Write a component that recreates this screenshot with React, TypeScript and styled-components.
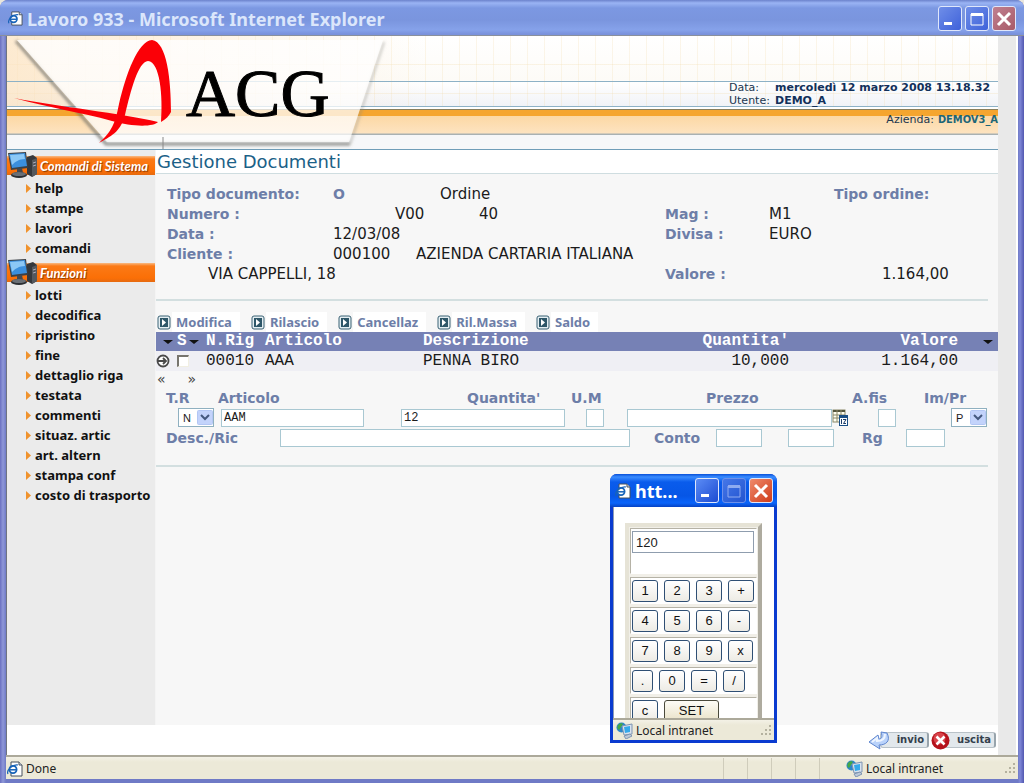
import React from "react";
import styled, { createGlobalStyle } from "styled-components";

const verdana = `"DejaVu Sans", Verdana, sans-serif`;
const tahoma = `"Noto Sans", Tahoma, sans-serif`;
const courier = `"Liberation Mono", "Courier New", monospace`;
const arial = `"Liberation Sans", Arial, sans-serif`;

const label = "#6d7ea8";

const Global = createGlobalStyle`
  * { box-sizing: border-box; }
  body { margin: 0; background: #e9e6dc; font-family: ${verdana}; color: #1b1b1b; }
  button, input, select { font: inherit; color: inherit; margin: 0; padding: 0; }
  a { color: inherit; text-decoration: none; }
  svg { flex-shrink: 0; }
`;

/* ---------- outer window ---------- */

const Window = styled.div`
  position: relative;
  min-height: 100vh;
  display: flex;
  flex-direction: column;
  padding: 0 6px 4px 6px;
  border-radius: 8px 8px 0 0;
  background: linear-gradient(90deg, #6a70c0 0, #8f98d8 3px, #6f7ac6 6px, #6f7ac6 calc(100% - 6px), #8088d8 calc(100% - 4px), #5258b0 100%);
`;

const TitleBar = styled.header`
  display: flex;
  align-items: center;
  gap: 4px;
  height: 36px;
  margin: 0 -6px;
  padding: 2px 8px 0 8px;
  border-radius: 8px 8px 0 0;
  border-bottom: 1px solid #8a909c;
  background: linear-gradient(#6c82cc 0, #9ab4f4 3px, #7c98e2 8px, #7a95de 20px, #86a2ea 30px, #7a92dc 34px);
`;

const Title = styled.h1`
  flex: 1;
  margin: 0;
  font: 700 18px/24px ${tahoma};
  color: #dbe6fb;
`;

const Buttons = styled.div`
  display: flex;
  gap: 3px;
`;

const CaptionButton = styled.button<{ $tone: "pale" | "blue" | "dim" | "rose" | "red" }>`
  display: grid;
  place-items: center;
  width: 24px;
  height: 25px;
  border: 1px solid ${(p) => (p.$tone === "dim" ? "#6d90ea" : "#dfe7fb")};
  border-radius: 3px;
  background: ${(p) =>
    ({
      pale: "linear-gradient(135deg, #6f8ee8, #3f62da)",
      blue: "linear-gradient(135deg, #5b8cf5, #1c4bd2)",
      dim: "linear-gradient(135deg, #4577e8, #2354d0)",
      rose: "linear-gradient(135deg, #c08090, #a85a68)",
      red: "linear-gradient(135deg, #ef8a6c, #cf3c1a)",
    })[p.$tone]};
`;

const Page = styled.div`
  flex: 1;
  display: flex;
  flex-direction: column;
  padding-right: 18px;
  border-left: 1px solid #6f7480;
  border-right: 2px solid #fff;
  background: #e9e9e9;
`;

/* ---------- banner ---------- */

const Banner = styled.div`
  display: flex;
  justify-content: space-between;
  height: 114px;
  background:
    linear-gradient(transparent 45px, #8db1c6 45px, #8db1c6 46px, transparent 46px, transparent 70px, #8db1c6 70px, #8db1c6 71px, #fff 71px, #fff 73px, #8a7f5c 73px, #8a7f5c 74px, #f5a52f 74px, #f5a52f 80px, #fcd8a4 80px, #fde3c0 97px, #a9b1b3 98px, #a9b1b3 99px, #f6f7f9 99px, #f6f7f9 113px, #6f9db8 113px),
    linear-gradient(90deg, rgba(252, 226, 190, 0.7), rgba(255, 250, 240, 0) 420px),
    repeating-linear-gradient(90deg, transparent 0, transparent 10px, rgba(240, 214, 160, 0.22) 10px, rgba(240, 214, 160, 0.22) 11px, transparent 11px, transparent 17px),
    repeating-linear-gradient(transparent 0, transparent 28px, rgba(240, 214, 160, 0.25) 28px, rgba(240, 214, 160, 0.25) 29px),
    linear-gradient(#ffffff, #fdfbf7 44px, #ffffff 46px, #f1f3f7 70px);
`;

const Info = styled.div`
  display: flex;
  flex-direction: column;
  align-items: flex-end;
  padding-top: 45px;
  font-size: 11px;
  line-height: 13px;
  color: #20364f;
`;

const Session = styled.dl`
  display: grid;
  grid-template-columns: 46px 223px;
  margin: 0 0 6px;
  dt, dd { margin: 0; }
  dd { font-weight: 700; color: #12305a; }
`;

const Company = styled.div`
  display: flex;
  gap: 4px;
  strong { font-family: "DejaVu Sans Condensed", ${verdana}; color: #1d6678; }
`;

/* ---------- side navigation ---------- */

const Columns = styled.div`
  flex: 1;
  display: flex;
`;

const Sidebar = styled.nav`
  flex: 0 0 149px;
  padding-top: 1px;
  border-right: 1px solid #f4f4f4;
  background: #ebebeb;
`;

const SectionHead = styled.h2`
  display: flex;
  align-items: center;
  height: 27px;
  margin: 0;
  background: linear-gradient(transparent 5px, #f9ba83 5px, #fb7a17 8px, #fb6f06 20px, #e56a10 24px, transparent 24px);
  font: italic 700 13px/18px Lato, ${tahoma};
  color: #fff;
  text-shadow: 1px 1px 1px #8a3a00;
  white-space: nowrap;
  span { padding: 3px 0 0 1px; }
`;

const Menu = styled.ul`
  margin: 0;
  padding: 0 0 0 19px;
  list-style: none;
  font: 700 13px/20px ${tahoma};
  color: #111;
`;

const MenuLink = styled.a`
  display: flex;
  align-items: center;
  gap: 4px;
  white-space: nowrap;
`;

/* ---------- main panel ---------- */

const Main = styled.main`
  flex: 1;
  min-width: 0;
  background: #f7f7f7;
`;

const Heading = styled.h2`
  margin: 0;
  height: 24px;
  padding-left: 1px;
  border-bottom: 1px solid #cfdde0;
  background: #fff;
  font: 400 18px/24px ${verdana};
  color: #1b6187;
`;

const Details = styled.div`
  padding: 10px 0 15px 11px;
  font-size: 15px;
  line-height: 20px;
`;

const Line = styled.div`
  display: flex;
`;

const Cell = styled.span<{ $w?: number; $label?: boolean; $indent?: number }>`
  flex: ${(p) => (p.$w ? `0 0 ${p.$w}px` : "0 0 auto")};
  padding-left: ${(p) => p.$indent ?? 0}px;
  white-space: nowrap;
  ${(p) => p.$label && `font-weight: 700; font-size: 14px; color: ${label};`}
`;

const Rule = styled.hr`
  height: 2px;
  margin: 0 10px 0 0;
  border: 0;
  background: #d3dfe0;
`;

const Toolbar = styled.div`
  display: flex;
  gap: 11px;
  padding: 11px 0 0 1px;
`;

const ToolButton = styled.button`
  display: flex;
  align-items: center;
  border: 0;
  background: none;
  font: 700 13px/20px ${tahoma};
  color: ${label};
  span { margin-left: 1px; padding: 0 8px 0 4px; background: #fff; }
`;

const Grid = styled.table`
  width: 100%;
  table-layout: fixed;
  border-collapse: collapse;
  font: 16px/19px ${courier};
  th, td { padding: 0; text-align: left; white-space: nowrap; height: 19px; }
  td { height: 20px; }
  thead { background: #7681b5; color: #fff; }
  tbody { background: #efeff4; }
`;

const Num = styled.td`
  && { text-align: right; }
`;

const NumHead = styled.th`
  && { text-align: right; }
`;

const Flex = styled.div<{ $pad?: number }>`
  display: flex;
  align-items: center;
  gap: 2px;
  padding-left: ${(p) => p.$pad ?? 0}px;
`;

const PlainButton = styled.button`
  display: grid;
  place-items: center;
  border: 0;
  background: none;
`;

const Tick = styled.input`
  appearance: none;
  width: 12px;
  height: 12px;
  border: 1px solid #f1efe2;
  border-top: 2px solid #77756e;
  border-left: 2px solid #77756e;
  background: #fff;
`;

const Pager = styled.div`
  display: flex;
  gap: 22px;
  padding-left: 1px;
  height: 17px;
  font: 400 14px/15px ${verdana};
  color: #444;
`;

const Form = styled.form`
  padding: 0 0 17px 10px;
`;

const Fields = styled.div`
  display: grid;
  grid-template-columns: 52px 183px 170px 56px 225px 72px 1fr;
  margin-bottom: 1px;
`;

const Field = styled.div<{ $label?: number; $box?: number }>`
  label { display: block; padding-left: ${(p) => p.$label ?? 0}px; font: 700 14px/20px ${verdana}; color: ${label}; white-space: nowrap; }
  > div { display: flex; align-items: center; height: 19px; padding-left: ${(p) => p.$box ?? 0}px; }
`;

const InlineFields = styled.div`
  display: flex;
  align-items: center;
  height: 20px;
  label { font: 700 14px/20px ${verdana}; color: ${label}; }
`;

const Slot = styled.div<{ $w: number }>`
  display: flex;
  flex: 0 0 ${(p) => p.$w}px;
`;

const TextBox = styled.input<{ $w: number }>`
  width: ${(p) => p.$w}px;
  height: 18px;
  padding: 0 2px;
  border: 1px solid #a9c8d2;
  border-radius: 0;
  background: #fff;
  font: 12px/16px ${courier};
`;

const SelectWrap = styled.span`
  position: relative;
  display: flex;
  svg { position: absolute; right: 1px; top: 2px; pointer-events: none; }
`;

const Select = styled.select`
  appearance: none;
  width: 36px;
  height: 19px;
  padding-left: 4px;
  border: 1px solid #8fb0c0;
  border-radius: 0;
  background: #fff;
  font: 11px/16px ${arial};
`;

/* ---------- footer ---------- */

const Actions = styled.div`
  display: flex;
  justify-content: flex-end;
  align-items: center;
  gap: 2px;
  height: 30px;
  padding: 0 2px 0 0;
  background: #fff;
`;

const ActionButton = styled.button`
  display: flex;
  align-items: center;
  border: 0;
  background: none;
  font: 700 10px/14px ${verdana};
  color: #34404c;
  svg { position: relative; z-index: 1; margin-right: -10px; }
  span { padding: 0 3px 0 16px; border: 1px solid #b9c2c8; border-right: 2px solid #98a4ac; border-radius: 3px; background: #e2e8ec; }
`;

const StatusBar = styled.footer<{ $inner?: boolean }>`
  display: flex;
  align-items: center;
  gap: 3px;
  height: ${(p) => (p.$inner ? 22 : 24)}px;
  padding: 1px 1px 0 ${(p) => (p.$inner ? 3 : 1)}px;
  border-top: 2px solid #aca99a;
  background: linear-gradient(#f3f1e6, #ece9d8 5px);
  font: 12px/18px ${tahoma};
  color: #222;
`;

const Panes = styled.div`
  flex: 1;
  display: flex;
  justify-content: flex-end;
  align-self: stretch;
`;

const Pane = styled.span`
  width: 24px;
  border-left: 1px solid #cfccbb;
`;

const Zone = styled.span<{ $w?: number }>`
  flex: ${(p) => (p.$w ? `0 0 ${p.$w}px` : "1")};
`;

/* ---------- calculator pop-up ---------- */

const Popup = styled.section`
  position: absolute;
  left: 610px;
  top: 474px;
  width: 167px;
  height: 269px;
  display: flex;
  flex-direction: column;
  padding: 0 3px 3px;
  border-radius: 7px 7px 0 0;
  background: #0a3bd0;
`;

const PopupTitle = styled.header`
  display: flex;
  align-items: center;
  gap: 4px;
  height: 33px;
  margin: 0 -3px;
  padding: 0 4px 0 5px;
  border-radius: 7px 7px 0 0;
  background: linear-gradient(#0850d8 0, #3a8cff 3px, #0a5cec 8px, #0656e6 22px, #0a64fa 29px, #0642c4 33px);
  h2 { flex: 1; margin: 0; font: 700 18px/24px ${tahoma}; color: #fff; }
`;

const PopupBody = styled.div`
  flex: 1;
  min-height: 0;
  overflow: hidden;
  padding: 16px 11px 0 11px;
  border-left: 1px solid #8d9bb5;
  border-right: 1px solid #fff;
  background: #fff;
`;

const Pad = styled.div`
  display: flex;
  flex-direction: column;
  gap: 3px;
  padding: 1px;
  border: 4px solid;
  border-color: #e6e3d6 #aeab9f #aeab9f #e6e3d6;
  background: #f1efe8;
`;

const PadRow = styled.div<{ $tall?: boolean }>`
  display: flex;
  align-items: flex-start;
  gap: 6px;
  height: ${(p) => (p.$tall ? 46 : 27)}px;
  padding: 2px 2px 0 1px;
  border: 1px solid;
  border-color: #b5b2a6 #fff #fff #b5b2a6;
  background: #fff;
`;

const Display = styled.input`
  width: 100%;
  height: 22px;
  padding: 0 3px;
  border: 1px solid #8f9dae;
  border-radius: 0;
  background: #fff;
  font: 13px/18px ${arial};
`;

const Key = styled.button<{ $w?: number; $warm?: boolean }>`
  flex: 0 0 ${(p) => p.$w ?? 26}px;
  height: 22px;
  border: 1px solid ${(p) => (p.$warm ? "#4a4a3c" : "#2f4f74")};
  border-radius: 3px;
  background: ${(p) => (p.$warm ? "linear-gradient(#fdfcf6, #e9e2c8)" : "linear-gradient(#ffffff, #edebe4)")};
  font: 13px/18px ${arial};
  color: #111;
`;

/* ---------- drawings ---------- */

const PageIcon = ({ size = 16 }: { size?: number }) => (
  <svg width={size} height={size} viewBox="0 0 16 16" aria-hidden="true">
    <path d="M4 1h8l3 3v11H4z" fill="#fff" stroke="#46505c" />
    <path d="M12 1v3h3" fill="#dbe3ee" stroke="#46505c" />
    <circle cx="6" cy="8.500" r="3.600" fill="#fff" stroke="#1763b8" strokeWidth="1.800" />
    <path d="M3 8.800h6" stroke="#1763b8" strokeWidth="1.500" />
    <path d="M1 13C-1 9 6 3 11 4" fill="none" stroke="#1763b8" strokeWidth="1.200" />
  </svg>
);

const Minimize = () => (
  <svg width="16" height="16" aria-hidden="true"><path d="M2 11h8v3H2z" fill="#fff" /></svg>
);

const Maximize = ({ color = "#fff" }: { color?: string }) => (
  <svg width="16" height="16" aria-hidden="true"><path d="M2 3h12v11H2z" fill="none" stroke={color} /><path d="M2 2h12v3H2z" fill={color} /></svg>
);

const Close = () => (
  <svg width="16" height="16" aria-hidden="true"><path d="M2 2l12 12M14 2L2 14" stroke="#fff" strokeWidth="3" /></svg>
);

const Logo = () => (
  <svg width="384" height="113" viewBox="7 36 384 113" role="img" aria-label="ACG">
    <defs>
      <filter id="soft" x="-10%" y="-10%" width="120%" height="125%"><feGaussianBlur stdDeviation="1.6" /></filter>
      <linearGradient id="sheet" x1="0" y1="0" x2="0" y2="1">
        <stop offset="0" stopColor="#fff" stopOpacity="0.75" />
        <stop offset="1" stopColor="#fff" stopOpacity="0.55" />
      </linearGradient>
    </defs>
    <path d="M16 41L106 144H350" fill="none" stroke="#6b6b66" strokeOpacity="0.75" strokeWidth="3" filter="url(#soft)" />
    <path d="M350 144L384 42" fill="none" stroke="#8a8a84" strokeOpacity="0.5" strokeWidth="2" filter="url(#soft)" />
    <path d="M17 40H383L349 142H107Z" fill="#fffdf9" fillOpacity="0.35" />
    <path d="M17 40H383L349 142H107Z" fill="url(#sheet)" />
    <path d="M163 137v12" stroke="#888" strokeWidth="1" />
    <path d="M99 143C112 131 115 124 119 104C126 74 138 41 152 40C167 42 171 80 171 112C169 116 166 119 161 122C163 96 160 62 148 61C138 62 131 90 125 115C121 130 114 135 99 143Z" fill="#fb0007" />
    <path d="M14 98C60 107 120 113 158 122C154 127 132 127 112 121C80 112 50 108 14 98Z" fill="#fb0007" />
    <text x="186" y="116" fontFamily="Liberation Serif, Times New Roman, serif" fontSize="68" fill="#000" stroke="#000" strokeWidth="1">ACG</text>
  </svg>
);

const Computer = () => (
  <svg width="32" height="27" viewBox="0 0 32 27" aria-hidden="true">
    <path d="M20 6l6-2 4 3v16l-5 3-5-3z" fill="#35383c" />
    <path d="M25 9l5-2v16l-5 3z" fill="#54585d" />
    <path d="M26 12l3-1M26 15l3-1" stroke="#aab" />
    <path d="M1 2l18-1 2 16-17 2z" fill="#3b4046" />
    <path d="M2 3l16-1 2 13-15 2z" fill="#3b8fdd" />
    <path d="M3 4l14-1 1 5C12 8 8 11 5 14z" fill="#8cc8f6" />
    <path d="M10 18l5-1 1 5h-6z" fill="#44484d" />
    <ellipse cx="12" cy="24" rx="8" ry="3" fill="#2c2f33" />
    <ellipse cx="12" cy="23" rx="7" ry="2" fill="#6a6f75" />
  </svg>
);

const Bullet = () => (
  <svg width="5" height="9" viewBox="0 0 5 9" aria-hidden="true"><path d="M0 0l5 4.500L0 9z" fill="#f0922c" /></svg>
);

const PlayIcon = () => (
  <svg width="14" height="15" viewBox="0 0 14 15" aria-hidden="true">
    <rect x="1" y="1" width="12" height="13" rx="2" fill="#e4eef2" stroke="#3a6274" />
    <rect x="3" y="3" width="8" height="9" fill="#2d5668" />
    <path d="M5 4l4 3.500L5 11z" fill="#fff" />
  </svg>
);

const Down = () => (
  <svg width="10" height="6" viewBox="0 0 10 6" aria-hidden="true"><path d="M0 1h10L5 5z" fill="#111" /></svg>
);

const RowArrow = () => (
  <svg width="14" height="14" viewBox="0 0 14 14" aria-hidden="true">
    <circle cx="7" cy="7" r="5.500" fill="#fff" stroke="#4a4a4a" strokeWidth="1.800" />
    <path d="M2 7h8M7 4l3 3-3 3" fill="none" stroke="#4a4a4a" strokeWidth="1.800" />
  </svg>
);

const DropArrow = () => (
  <svg width="16" height="15" viewBox="0 0 16 15" aria-hidden="true">
    <rect x="0.500" y="0.500" width="15" height="14" rx="1" fill="#c3d3fb" stroke="#b3c6f4" />
    <path d="M4 5l4 4 4-4" fill="none" stroke="#44587e" strokeWidth="2" />
  </svg>
);

const CalcIcon = () => (
  <svg width="16" height="17" viewBox="0 0 16 17" aria-hidden="true">
    <rect x="1" y="1" width="12" height="12" fill="#fffef0" stroke="#8a8868" />
    <path d="M1 2h12" stroke="#55553c" strokeWidth="2" />
    <path d="M1 6h12M1 9h12M5 1v12M9 1v12" stroke="#8a8868" />
    <rect x="7.500" y="6.500" width="8" height="10" fill="#fff" stroke="#1b4f86" />
    <path d="M7 8h9" stroke="#1b4f86" strokeWidth="2" />
    <path d="M9.500 10v5M11 10.500h3L11.500 14.500H14" fill="none" stroke="#1b3d6b" />
  </svg>
);

const SendIcon = () => (
  <svg width="22" height="20" viewBox="0 0 22 20" aria-hidden="true">
    <path d="M1 12l9-7 1 4c2 0 4-2 2-7l6 1c4 8-1 12-8 12l1 4z" fill="#b9d2fa" stroke="#5f86cf" />
    <path d="M4 12l5-4v3c5 0 8-2 8-7" fill="none" stroke="#eef5ff" strokeWidth="2" />
  </svg>
);

const ExitIcon = () => (
  <svg width="19" height="19" viewBox="0 0 19 19" aria-hidden="true">
    <circle cx="9.500" cy="9.500" r="9" fill="#b5121b" />
    <circle cx="8.500" cy="7.500" r="6" fill="#d8434a" />
    <path d="M5.500 5.500l8 8M13.500 5.500l-8 8" stroke="#fff" strokeWidth="2.600" />
  </svg>
);

const ZoneIcon = () => (
  <svg width="17" height="17" viewBox="0 0 17 17" aria-hidden="true">
    <circle cx="5.500" cy="5.500" r="5" fill="#2c86c9" />
    <path d="M2 3c2-2 4-2 5-1L5 5 3 8C1 7 1 5 2 3z" fill="#45a846" />
    <path d="M6 4l10-2v10l-8 1z" fill="#d8e2ee" stroke="#7f95b2" />
    <path d="M8 5l6-1v6l-5 1z" fill="#35a9ea" />
    <path d="M8 14l6-2 2 2-6 3z" fill="#bcc9d8" stroke="#7f95b2" />
  </svg>
);

const Grip = () => (
  <svg width="13" height="13" viewBox="0 0 13 13" aria-hidden="true">
    <path d="M9 1h2v2H9zM9 5h2v2H9zM9 9h2v2H9zM5 5h2v2H5zM5 9h2v2H5zM1 9h2v2H1z" fill="#b4b19f" />
  </svg>
);

/* ---------- data ---------- */

const sections = [
  { title: "Comandi di Sistema", items: ["help", "stampe", "lavori", "comandi"] },
  {
    title: "Funzioni",
    items: ["lotti", "decodifica", "ripristino", "fine", "dettaglio riga", "testata", "commenti", "situaz. artic", "art. altern", "stampa conf", "costo di trasporto"],
  },
];

const tools = ["Modifica", "Rilascio", "Cancellaz", "Ril.Massa", "Saldo"];

const keys: [string, number?][][] = [
  [["1"], ["2"], ["3"], ["+"]],
  [["4"], ["5"], ["6"], ["-", 22]],
  [["7"], ["8"], ["9"], ["x", 25]],
  [[".", 21], ["0"], ["="], ["/", 22]],
];

const Drop = ({ id, value }: { id: string; value: string }) => (
  <SelectWrap>
    <Select id={id} defaultValue={value}><option>{value}</option></Select>
    <DropArrow />
  </SelectWrap>
);

const Calculator = () => (
  <Popup aria-label="Calculator">
    <PopupTitle>
      <PageIcon />
      <h2>htt...</h2>
      <Buttons>
        <CaptionButton $tone="blue" aria-label="Minimize"><Minimize /></CaptionButton>
        <CaptionButton $tone="dim" aria-label="Maximize"><Maximize color="#8fabf0" /></CaptionButton>
        <CaptionButton $tone="red" aria-label="Close"><Close /></CaptionButton>
      </Buttons>
    </PopupTitle>
    <PopupBody>
      <Pad>
        <PadRow $tall><Display aria-label="Result" defaultValue="120" /></PadRow>
        {keys.map((row, i) => (
          <PadRow key={i}>
            {row.map(([k, w]) => <Key key={k} $w={w}>{k}</Key>)}
          </PadRow>
        ))}
        <PadRow><Key>c</Key><Key $w={55} $warm>SET</Key></PadRow>
      </Pad>
    </PopupBody>
    <StatusBar $inner>
      <ZoneIcon />
      <Zone>Local intranet</Zone>
      <Grip />
    </StatusBar>
  </Popup>
);

export default function App() {
  return (
    <>
      <Global />
      <Window>
        <TitleBar>
          <PageIcon size={15} />
          <Title>Lavoro 933 - Microsoft Internet Explorer</Title>
          <Buttons>
            <CaptionButton $tone="pale" aria-label="Minimize"><Minimize /></CaptionButton>
            <CaptionButton $tone="pale" aria-label="Maximize"><Maximize /></CaptionButton>
            <CaptionButton $tone="rose" aria-label="Close"><Close /></CaptionButton>
          </Buttons>
        </TitleBar>

        <Page>
          <Banner>
            <Logo />
            <Info>
              <Session>
                <dt>Data:</dt><dd>mercoledì 12 marzo 2008 13.18.32</dd>
                <dt>Utente:</dt><dd>DEMO_A</dd>
              </Session>
              <Company>Azienda: <strong>DEMOV3_A</strong></Company>
            </Info>
          </Banner>

          <Columns>
            <Sidebar>
              {sections.map((s) => (
                <React.Fragment key={s.title}>
                  <SectionHead><Computer /><span>{s.title}</span></SectionHead>
                  <Menu>
                    {s.items.map((t) => (
                      <li key={t}><MenuLink href="#"><Bullet />{t}</MenuLink></li>
                    ))}
                  </Menu>
                </React.Fragment>
              ))}
            </Sidebar>

            <Main>
              <Heading>Gestione Documenti</Heading>
              <Details>
                <Line>
                  <Cell $w={166} $label>Tipo documento:</Cell><Cell $w={107} $label>O</Cell><Cell $w={394}>Ordine</Cell><Cell $label>Tipo ordine:</Cell>
                </Line>
                <Line>
                  <Cell $w={166} $label>Numero :</Cell><Cell $w={146} $indent={62}>V00</Cell><Cell $w={186}>40</Cell><Cell $w={104} $label>Mag :</Cell><Cell>M1</Cell>
                </Line>
                <Line>
                  <Cell $w={166} $label>Data :</Cell><Cell $w={332}>12/03/08</Cell><Cell $w={104} $label>Divisa :</Cell><Cell>EURO</Cell>
                </Line>
                <Line>
                  <Cell $w={166} $label>Cliente :</Cell><Cell $w={83}>000100</Cell><Cell>AZIENDA CARTARIA ITALIANA</Cell>
                </Line>
                <Line>
                  <Cell $w={498} $indent={41}>VIA CAPPELLI, 18</Cell><Cell $w={217} $label>Valore :</Cell><Cell>1.164,00</Cell>
                </Line>
              </Details>
              <Rule />

              <Toolbar>
                {tools.map((t) => <ToolButton key={t}><PlayIcon /><span>{t}</span></ToolButton>)}
              </Toolbar>

              <Grid>
                <colgroup>
                  <col width="20" /><col width="30" /><col width="59" /><col width="158" /><col /><col width="130" /><col width="169" /><col width="40" />
                </colgroup>
                <thead>
                  <tr>
                    <th><Flex $pad={7}><PlainButton aria-label="Sort"><Down /></PlainButton></Flex></th>
                    <th><Flex $pad={1}>S<PlainButton aria-label="Sort by S"><Down /></PlainButton></Flex></th>
                    <th>N.Rig</th>
                    <th>Articolo</th>
                    <th>Descrizione</th>
                    <NumHead>Quantita'</NumHead>
                    <NumHead>Valore</NumHead>
                    <th><Flex $pad={25}><PlainButton aria-label="Columns"><Down /></PlainButton></Flex></th>
                  </tr>
                </thead>
                <tbody>
                  <tr>
                    <td><PlainButton aria-label="Open row"><RowArrow /></PlainButton></td>
                    <td><Flex $pad={1}><Tick type="checkbox" aria-label="Select row 00010" /></Flex></td>
                    <td>00010</td>
                    <td>AAA</td>
                    <td>PENNA BIRO</td>
                    <Num>10,000</Num>
                    <Num>1.164,00</Num>
                    <td />
                  </tr>
                </tbody>
              </Grid>
              <Pager>
                <PlainButton aria-label="Previous">«</PlainButton>
                <PlainButton aria-label="Next">»</PlainButton>
              </Pager>

              <Form>
                <Fields>
                  <Field $box={12}><label htmlFor="tr">T.R</label><div><Drop id="tr" value="N" /></div></Field>
                  <Field $box={3}><label htmlFor="art">Articolo</label><div><TextBox id="art" $w={143} defaultValue="AAM" /></div></Field>
                  <Field $label={66}><label htmlFor="qta">Quantita'</label><div><TextBox id="qta" $w={164} defaultValue="12" /></div></Field>
                  <Field $box={15}><label htmlFor="um">U.M</label><div><TextBox id="um" $w={18} /></div></Field>
                  <Field $label={79}>
                    <label htmlFor="prezzo">Prezzo</label>
                    <div><TextBox id="prezzo" $w={205} /><PlainButton type="button" aria-label="Calculator"><CalcIcon /></PlainButton></div>
                  </Field>
                  <Field $box={26}><label htmlFor="afis">A.fis</label><div><TextBox id="afis" $w={18} /></div></Field>
                  <Field $box={27}><label htmlFor="impr">Im/Pr</label><div><Drop id="impr" value="P" /></div></Field>
                </Fields>
                <InlineFields>
                  <Slot $w={114}><label htmlFor="desc">Desc./Ric</label></Slot>
                  <Slot $w={374}><TextBox id="desc" $w={350} /></Slot>
                  <Slot $w={62}><label htmlFor="conto">Conto</label></Slot>
                  <Slot $w={72}><TextBox id="conto" $w={46} /></Slot>
                  <Slot $w={74}><TextBox aria-label="Conto 2" $w={46} /></Slot>
                  <Slot $w={44}><label htmlFor="rg">Rg</label></Slot>
                  <TextBox id="rg" $w={39} />
                </InlineFields>
              </Form>
              <Rule />
            </Main>
          </Columns>

          <Actions>
            <ActionButton><SendIcon /><span>invio</span></ActionButton>
            <ActionButton><ExitIcon /><span>uscita</span></ActionButton>
          </Actions>
        </Page>

        <StatusBar>
          <PageIcon />
          <span>Done</span>
          <Panes><Pane /><Pane /><Pane /><Pane /><Pane /></Panes>
          <ZoneIcon />
          <Zone $w={135}>Local intranet</Zone>
          <Grip />
        </StatusBar>
        <Calculator />
      </Window>
    </>
  );
}
